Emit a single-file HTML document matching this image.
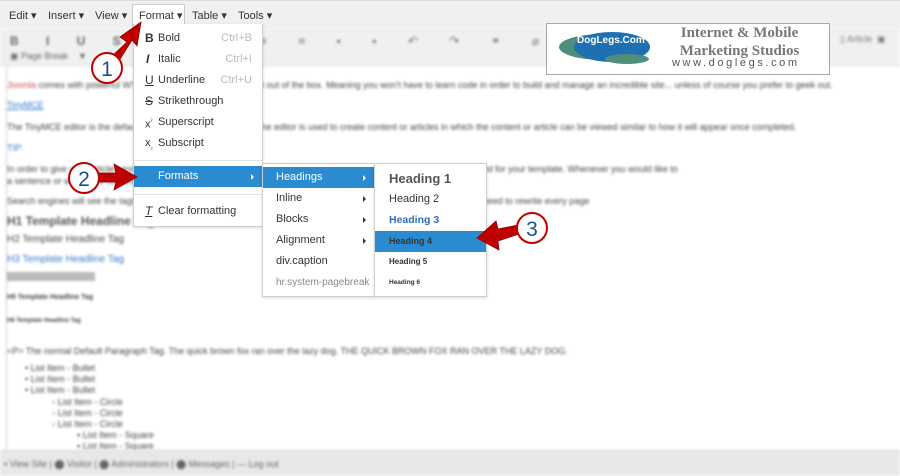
<!DOCTYPE html>
<html><head><meta charset="utf-8"><style>
*{margin:0;padding:0;box-sizing:border-box}
body{width:900px;height:476px;overflow:hidden;background:#fff;font-family:"Liberation Sans",Arial,sans-serif;font-size:11px;color:#333;position:relative}
.abs{position:absolute}
.menubar{left:0;top:0;width:900px;height:28px;background:#f0f0f0;border-top:1px solid #ddd}
.mb{position:absolute;top:8px;font-size:11px;color:#333}
.toolbar{left:0;top:28px;width:900px;height:38px;background:#f0f0f0;border-bottom:1px solid #ddd}
.blur{filter:blur(1.3px)}
.content{left:6px;top:66px;width:894px;height:384px;border-left:1px solid #ccc}
.footer{left:0;top:450px;width:900px;height:26px;background:#e8e8e8;border-top:1px solid #d8d8d8}
.menu{background:#fff;border:1px solid #cfcfcf;box-shadow:0 1px 3px rgba(0,0,0,.15)}
.it{position:absolute;left:0;width:100%;height:21px;line-height:21px;font-size:11px;color:#333;white-space:nowrap}
.hl{background:#2b8bd0;color:#fff}
.sc{position:absolute;right:10px;color:#bbb}
.tri{position:absolute;right:8px;top:8px;width:0;height:0;border-left:3px solid #333;border-top:3px solid transparent;border-bottom:3px solid transparent}
.hl .tri{border-left-color:#fff}
</style></head><body>
<div class="abs menubar">
<span class="mb" style="left:9px">Edit ▾</span>
<span class="mb" style="left:48px">Insert ▾</span>
<span class="mb" style="left:95px">View ▾</span>
<div class="abs" style="left:132px;top:3px;width:53px;height:22px;background:#fff;border:1px solid #ccc;border-bottom:none"></div>
<span class="mb" style="left:139px">Format ▾</span>
<span class="mb" style="left:192px">Table ▾</span>
<span class="mb" style="left:238px">Tools ▾</span>
</div>
<div class="abs toolbar blur">
<div class="abs" style="left:10px;top:6px;font-weight:bold;color:#666;font-size:12px;letter-spacing:12px">B I U S ≡</div>
<div class="abs" style="left:260px;top:6px;color:#777;font-size:12px;letter-spacing:14px">≡ ≡ ▪ ▪ ↶ ↷ ⚭ ⌀ ▯ ‹› — ▦</div>
<div class="abs" style="left:10px;top:23px;color:#666;font-size:9px">▣ Page Break &nbsp;&nbsp;&nbsp;▼</div>
<div class="abs" style="left:840px;top:6px;color:#777;font-size:9px">▯ Article &nbsp;▣</div>
</div>
<div class="abs content blur" style="font-size:9px;color:#444">
<div class="abs" style="left:0;top:14px;width:890px;white-space:nowrap"><span style="color:#c55">Joomla</span> comes with powerful WYSIWYG editor ready to use right out of the box. Meaning you won't have to learn code in order to build and manage an incredible site... unless of course you prefer to geek out.</div>
<div class="abs" style="left:0;top:34px;color:#37c;text-decoration:underline">TinyMCE</div>
<div class="abs" style="left:0;top:56px;width:890px">The TinyMCE editor is the default editor included with Joomla. The editor is used to create content or articles in which the content or article can be viewed similar to how it will appear once completed.</div>
<div class="abs" style="left:0;top:77px;color:#37c">TIP:</div>
<div class="abs" style="left:0;top:98px;width:1000px;white-space:nowrap">In order to give your articles and pages a consistent look, use the Headline Tags that are already built into and customized for your template. Whenever you would like to</div>
<div class="abs" style="left:0;top:110px">a sentence or word as a heading &lt;&lt; HEADINGS &gt;&gt;</div>
<div class="abs" style="left:0;top:130px;width:1000px;white-space:nowrap">Search engines will see the tags ... change out your template fonts, your fonts will change with the template without the need to rewrite every page</div>
<div class="abs" style="left:0;top:148px;font-size:12px;font-weight:bold;color:#555">H1 Template Headline Tag</div>
<div class="abs" style="left:0;top:168px;font-size:10px">H2 Template Headline Tag</div>
<div class="abs" style="left:0;top:188px;font-size:10px;color:#37c">H3 Template Headline Tag</div>
<div class="abs" style="left:0;top:206px;width:88px;height:9px;background:#bbb"></div>
<div class="abs" style="left:0;top:228px;font-size:7px;font-weight:bold">H5 Template Headline Tag</div>
<div class="abs" style="left:0;top:252px;font-size:6px;font-weight:bold">H6 Template Headline Tag</div>
<div class="abs" style="left:0;top:280px;width:900px">&lt;P&gt; The normal Default Paragraph Tag. The quick brown fox ran over the lazy dog. THE QUICK BROWN FOX RAN OVER THE LAZY DOG.</div>
<div class="abs" style="left:18px;top:297px;line-height:11px">• List Item - Bullet<br>• List Item - Bullet<br>• List Item - Bullet</div>
<div class="abs" style="left:45px;top:331px;line-height:11px">◦ List Item - Circle<br>◦ List Item - Circle<br>◦ List Item - Circle</div>
<div class="abs" style="left:70px;top:364px;line-height:11px">▪ List Item - Square<br>▪ List Item - Square</div>
</div>
<div class="abs footer blur" style="font-size:9px;color:#666"><div class="abs" style="left:4px;top:8px">▪ View Site | ⬤ Visitor | ⬤ Administrators | ⬤ Messages | — Log out</div></div>

<!-- logo -->
<div class="abs" style="left:546px;top:23px;width:284px;height:52px;background:#fff;border:1px solid #aaa">
<svg class="abs" style="left:10px;top:2px" width="100" height="40"><ellipse cx="46" cy="21" rx="44" ry="13" fill="#4e8f7c"/><ellipse cx="55" cy="21" rx="38" ry="15" fill="#1f6fb3"/><ellipse cx="70" cy="33" rx="22" ry="5" fill="#4e8f7c"/></svg>
<div class="abs" style="left:30px;top:11px;color:#fff;font-weight:bold;font-size:10px;white-space:nowrap">DogLegs.Com</div>
<div class="abs" style="left:110px;top:0px;font-family:'Liberation Serif',serif;font-weight:bold;font-size:15px;color:#777;line-height:18px;text-align:center;width:165px;white-space:nowrap">Internet &amp; Mobile<br>Marketing Studios</div>
<div class="abs" style="left:125px;top:33px;font-size:11px;color:#555;letter-spacing:2.6px;white-space:nowrap">www.doglegs.com</div>
</div>

<!-- format menu -->
<div class="abs menu" style="left:133px;top:24px;width:130px;height:203px;border-top:none">
<div class="it" style="top:4px"><b style="position:absolute;left:11px;font-size:12px">B</b><span style="position:absolute;left:24px">Bold</span><span class="sc">Ctrl+B</span></div>
<div class="it" style="top:25px"><i style="position:absolute;left:12px;font-size:12px;font-weight:bold">I</i><span style="position:absolute;left:24px">Italic</span><span class="sc">Ctrl+I</span></div>
<div class="it" style="top:46px"><u style="position:absolute;left:11px;font-size:12px">U</u><span style="position:absolute;left:24px">Underline</span><span class="sc">Ctrl+U</span></div>
<div class="it" style="top:67px"><s style="position:absolute;left:11px;font-size:12px">S</s><span style="position:absolute;left:24px">Strikethrough</span></div>
<div class="it" style="top:88px"><span style="position:absolute;left:11px">x<sup style="font-size:6px">²</sup></span><span style="position:absolute;left:24px">Superscript</span></div>
<div class="it" style="top:109px"><span style="position:absolute;left:11px">x<sub style="font-size:6px">₂</sub></span><span style="position:absolute;left:24px">Subscript</span></div>
<div class="abs" style="left:0;top:136px;width:100%;height:1px;background:#e2e2e2"></div>
<div class="it hl" style="top:142px"><span style="position:absolute;left:24px">Formats</span><span class="tri"></span></div>
<div class="abs" style="left:0;top:170px;width:100%;height:1px;background:#e2e2e2"></div>
<div class="it" style="top:177px"><i style="position:absolute;left:11px;font-size:12px;text-decoration:underline">T</i><span style="position:absolute;left:24px">Clear formatting</span></div>
</div>
<!-- submenu 2 -->
<div class="abs menu" style="left:262px;top:163px;width:113px;height:134px">
<div class="it hl" style="top:3px"><span style="position:absolute;left:13px">Headings</span><span class="tri"></span></div>
<div class="it" style="top:24px"><span style="position:absolute;left:13px">Inline</span><span class="tri"></span></div>
<div class="it" style="top:45px"><span style="position:absolute;left:13px">Blocks</span><span class="tri"></span></div>
<div class="it" style="top:66px"><span style="position:absolute;left:13px">Alignment</span><span class="tri"></span></div>
<div class="it" style="top:87px"><span style="position:absolute;left:13px">div.caption</span></div>
<div class="it" style="top:108px;color:#888"><span style="position:absolute;left:13px;font-size:10px">hr.system-pagebreak</span></div>
</div>
<!-- submenu 3 -->
<div class="abs menu" style="left:374px;top:163px;width:113px;height:134px">
<div class="it" style="top:4px;height:22px;line-height:22px"><b style="position:absolute;left:14px;font-size:13px;color:#555">Heading 1</b></div>
<div class="it" style="top:25px"><span style="position:absolute;left:14px;font-size:11px">Heading 2</span></div>
<div class="it" style="top:46px"><b style="position:absolute;left:14px;color:#2d6db5;font-size:10.5px">Heading 3</b></div>
<div class="it hl" style="top:67px;color:#333"><b style="position:absolute;left:14px;font-size:9px">Heading 4</b></div>
<div class="it" style="top:87px"><b style="position:absolute;left:14px;font-size:8px">Heading 5</b></div>
<div class="it" style="top:108px"><b style="position:absolute;left:14px;font-size:6.5px">Heading 6</b></div>
</div>

<!-- arrows -->
<svg class="abs" style="left:0;top:0" width="900" height="476">
<g fill="#c00000" stroke="#8b0000" stroke-width="0.8">
<polygon points="110,58 127,42 120,37 141,22 137,46 132,40 117,64"/>
<polygon points="99,173 116,173 114,164 137,177 114,190 116,182 99,182"/>
<polygon points="518,225 498,229 496,221 477,238 499,250 498,241 519,234"/>
</g>
<g fill="#fff" stroke="#c00000" stroke-width="2">
<circle cx="107" cy="68" r="15"/><circle cx="84" cy="178" r="15"/><circle cx="532" cy="228" r="15"/>
</g>
<g fill="#1c4f8f" font-family="Liberation Sans,sans-serif" font-size="21" text-anchor="middle">
<text x="107" y="76">1</text><text x="84" y="186">2</text><text x="532" y="236">3</text>
</g>
</svg>
</body></html>
